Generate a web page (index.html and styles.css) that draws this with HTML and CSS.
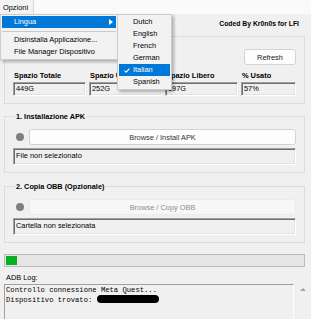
FILE: index.html
```html
<!DOCTYPE html>
<html lang="it">
<head>
<meta charset="utf-8">
<title>Quest Installer</title>
<link rel="stylesheet" href="styles.css">
</head>
<body>
<div class="window">
  <div class="menubar"><span class="menubar-item">Opzioni</span></div>
  <div class="content">
    <div class="header"><span class="credit">Coded By Kr0n0s for LFI</span></div>

    <fieldset class="group disk">
      <div class="refresh-row"><button class="btn refresh">Refresh</button></div>
      <div class="disk-grid">
        <span class="disk-label">Spazio Totale</span>
        <span class="disk-label">Spazio Usato</span>
        <span class="disk-label">Spazio Libero</span>
        <span class="disk-label">% Usato</span>
        <div class="field">449G</div>
        <div class="field">252G</div>
        <div class="field">197G</div>
        <div class="field">57%</div>
      </div>
    </fieldset>

    <fieldset class="group section first">
      <legend>1. Installazione APK</legend>
      <div class="action-row"><span class="dot"></span><button class="btn browse">Browse / Install APK</button></div>
      <div class="field wide">File non selezionato</div>
    </fieldset>

    <fieldset class="group section second">
      <legend>2. Copia OBB (Opzionale)</legend>
      <div class="action-row"><span class="dot"></span><button class="btn browse disabled">Browse / Copy OBB</button></div>
      <div class="field wide">Cartella non selezionata</div>
    </fieldset>

    <div class="progress"><div class="progress-fill" style="width:11px"></div></div>

    <div class="log-label">ADB Log:</div>
    <div class="log">
      <pre class="log-text">Controllo connessione Meta Quest...
Dispositivo trovato: <span class="redact"></span></pre>
      <div class="scrollbar"><span class="scroll-up"></span></div>
    </div>
  </div>

  <div class="menu menu-main">
    <div class="menu-item active">Lingua<span class="submenu-arrow"></span></div>
    <div class="menu-sep"></div>
    <div class="menu-item">Disinstalla Applicazione...</div>
    <div class="menu-item">File Manager Dispositivo</div>
  </div>

  <div class="menu menu-sub">
    <div class="menu-item">Dutch</div>
    <div class="menu-item">English</div>
    <div class="menu-item">French</div>
    <div class="menu-item">German</div>
    <div class="menu-item active"><svg class="check" width="6" height="5" viewBox="0 0 6 5"><polyline points="0.6,2.6 2.2,4.1 5.4,0.7" fill="none" stroke="#fff" stroke-width="1.2"/></svg>Italian</div>
    <div class="menu-item">Spanish</div>
  </div>
</div>
</body>
</html>
```
FILE: styles.css
```css
* { box-sizing: border-box; }
html, body { margin: 0; padding: 0; }
body {
  width: 311px;
  height: 319px;
  overflow: hidden;
  background: #f0f0f0;
  font-family: "Liberation Sans", Arial, sans-serif;
  font-size: 7.4px;
  line-height: 9px;
  color: #000;
}
.window { position: relative; width: 311px; height: 319px; overflow: hidden; }

.menubar { height: 14px; background: #fafafa; display: flex; }
.menubar-item {
  width: 34px;
  padding: 3px 0 0 3px;
  background: #f3f3f3;
  border-right: 1px solid #d8d8d8;
}

.content { padding: 0 6px 0 4px; display: flex; flex-direction: column; }
.header { display: flex; justify-content: flex-end; margin-top: 5px; height: 9px; padding-right: 6px; }
.credit { font-weight: bold; font-size: 6.8px; }

.group {
  margin: 0;
  min-width: 0;
  border: 1px solid #dcdcdc;
  padding: 0 8px 7px 8px;
}
.group legend {
  font-weight: bold;
  font-size: 7.3px;
  line-height: 9px;
  padding: 0 1px;
  margin-left: 2px;
}

.disk { margin-top: 8px; padding-top: 12px; }
.refresh-row { display: flex; justify-content: flex-end; }
.btn {
  font: inherit;
  color: #222;
  background: #fdfdfd;
  border: 1px solid #d3d3d3;
  border-radius: 3px;
  padding: 0;
  margin: 0;
}
.refresh { width: 52px; height: 16px; }
.disk-grid {
  margin-top: 6px;
  display: grid;
  grid-template-columns: 73px 73px 73px 55px;
  column-gap: 3px;
  row-gap: 2px;
}
.disk-label { font-weight: bold; padding-left: 1px; height: 9px; white-space: nowrap; }

.field {
  height: 14px;
  line-height: 11px;
  padding: 0 2px;
  background: #f0f0f0;
  border: 1px solid;
  border-color: #a0a0a0 #ffffff #ffffff #a0a0a0;
  box-shadow: inset 1px 1px 0 #6d6d6d, inset -1px -1px 0 #e3e3e3;
  white-space: nowrap;
  overflow: hidden;
}
.field.wide { margin-top: 3px; height: 17px; line-height: 14px; }

.section { padding-top: 8px; }
.section.first { margin-top: 8px; }
.section.second { margin-top: 9px; }
.action-row { display: flex; align-items: center; gap: 5px; height: 16px; }
.dot { width: 8px; height: 8px; margin-left: 3px; border-radius: 50%; background: #808080; flex: none; }
.browse { flex: 1; height: 16px; color: #333; }
.browse.disabled { background: #f7f7f7; border-color: #ebebeb; color: #8d8d8d; }

.progress {
  margin-top: 11px;
  height: 13px;
  padding: 1px;
  background: #e6e6e6;
  border: 1px solid #bcbcbc;
}
.progress-fill { height: 9px; background: #06b025; }

.log-label { margin-top: 6px; padding-left: 2px; height: 9px; }
.log {
  margin-top: 2px;
  margin-right: -6px;
  height: 40px;
  display: flex;
}
.log-text {
  flex: 1;
  margin: 0;
  padding: 1px 1px 0 1px;
  font-family: "Liberation Mono", "Courier New", monospace;
  font-size: 7.2px;
  line-height: 9px;
  background: #f0f0f0;
  border: 1px solid;
  border-color: #a0a0a0 #ffffff #ffffff #a0a0a0;
  white-space: pre;
  overflow: hidden;
}
.redact {
  display: inline-block;
  width: 62px;
  height: 8px;
  background: #000;
  border-radius: 4px;
  vertical-align: -1px;
}
.scrollbar { width: 17px; flex: none; display: flex; justify-content: center; padding-top: 4px; }
.scroll-up {
  width: 0; height: 0;
  border-left: 3.5px solid transparent;
  border-right: 3.5px solid transparent;
  border-bottom: 3px solid #a3a3a3;
}

.menu {
  position: absolute;
  top: 14px;
  background: #f2f2f2;
  border: 1px solid #cccccc;
  box-shadow: 2px 2px 3px rgba(0, 0, 0, 0.28);
  padding: 1px;
  display: flex;
  flex-direction: column;
}
.menu-main { left: 0; width: 118px; }
.menu-sub { left: 117px; width: 55px; }
.menu-item {
  position: relative;
  height: 12px;
  line-height: 12px;
  padding-left: 12px;
  white-space: nowrap;
}
.menu-sub .menu-item { padding-left: 14px; }
.menu-item.active { background: #0078d7; color: #fff; }
.menu-sep { height: 6px; display: flex; align-items: center; }
.menu-sep::after { content: ""; flex: 1; border-top: 1px solid #c8c8c8; }
.submenu-arrow {
  position: absolute;
  right: 3px;
  top: 3px;
  width: 0; height: 0;
  border-left: 4px solid #fff;
  border-top: 3px solid transparent;
  border-bottom: 3px solid transparent;
}
.check { position: absolute; left: 5px; top: 4px; }
```
